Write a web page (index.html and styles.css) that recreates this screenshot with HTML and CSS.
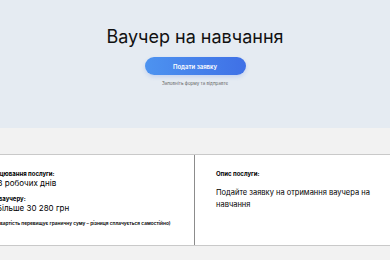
FILE: index.html
```html
<!DOCTYPE html>
<html lang="uk">
<head>
    <meta charset="UTF-8">
    <meta name="viewport" content="width=device-width, initial-scale=1.0">
    <title>Ваучер на навчання</title>
    <link rel="stylesheet" href="styles.css">
</head>
<body>
    <header class="hero">
        <h1 class="hero-title">Ваучер на навчання</h1>
        <button class="hero-button">Подати заявку</button>
        <p class="hero-hint">Заповніть форму та відправте</p>
    </header>
    <main class="details">
        <div class="details-box">
            <div class="details-col">
                <div class="details-label">Опрацювання послуги:</div>
                <div class="details-value">До 8 робочих днів</div>
                <div class="details-label">Ціна ваучеру:</div>
                <div class="details-value">Не Більше 30 280 грн</div>
                <div class="details-note">(Якщо вартість перевищує граничну суму – різниця сплачується самостійно)</div>
            </div>
            <div class="details-col">
                <div class="details-label">Опис послуги:</div>
                <div class="details-text">Подайте заявку на отримання ваучера на навчання</div>
            </div>
        </div>
    </main>
</body>
</html>
```

FILE: styles.css
```css
html, body {
    margin: 0;
    height: 100%;
}
body {
    background: #f2f2f2;
    font-family: Inter, "Noto Sans", sans-serif;
    color: #000;
    overflow: hidden;
}
.hero {
    height: 128px;
    box-sizing: border-box;
    background: #e5ebf2;
    display: flex;
    flex-direction: column;
    align-items: center;
    padding-top: 26px;
}
.hero-title {
    margin: 0;
    font-size: 18px;
    font-weight: 400;
    line-height: 22px;
    color: #111;
}
.hero-button {
    margin-top: 9px;
    width: 101px;
    height: 18px;
    border: 0;
    border-radius: 9px;
    background: linear-gradient(90deg, #4d93f0, #3f70e6);
    color: #fff;
    font-family: inherit;
    font-size: 6px;
    font-weight: 600;
    padding: 0;
    box-shadow: 0 2px 4px rgba(63, 112, 230, 0.2);
}
.hero-hint {
    margin: 6px 0 0;
    font-size: 4.5px;
    color: #666;
}
.details {
    display: flex;
    justify-content: center;
    padding-top: 26px;
}
.details-box {
    flex-shrink: 0;
    width: 460px;
    height: 92px;
    box-sizing: border-box;
    display: flex;
    background: #fff;
    border-top: 1px solid #c9c9c9;
    border-bottom: 1px solid #c9c9c9;
}
.details-col {
    width: 50%;
    box-sizing: border-box;
    padding: 15px 21px;
    color: #000;
}
.details-col:first-child {
    border-right: 1px solid #8c8c8c;
    padding-left: 19px;
}
.details-label {
    font-size: 6px;
    font-weight: 700;
    line-height: 8px;
}
.details-value {
    font-size: 8px;
    line-height: 10px;
    margin-bottom: 7px;
}
.details-note {
    font-size: 4.8px;
    font-weight: 600;
    line-height: 7px;
    white-space: nowrap;
}
.details-text {
    margin-top: 9px;
    font-size: 7.5px;
    line-height: 12px;
}
```
